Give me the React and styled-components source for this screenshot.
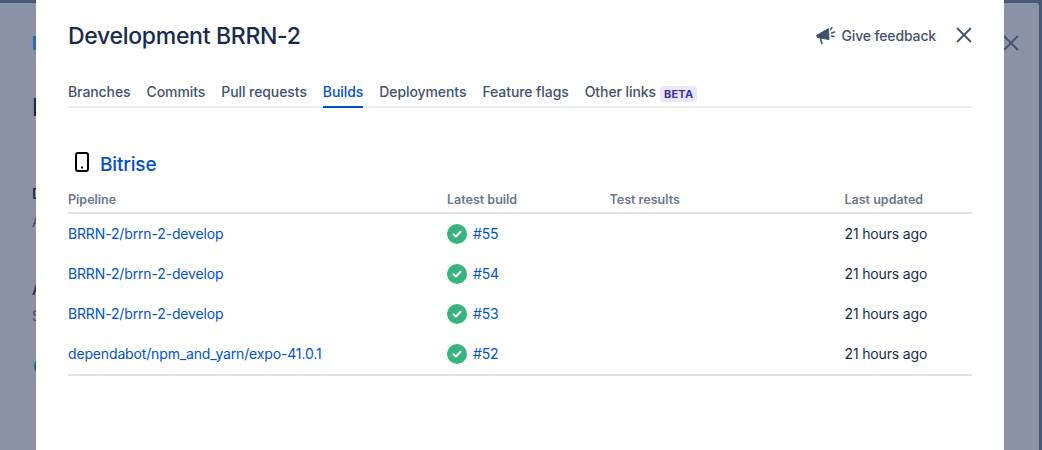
import React from "react";
import styled, { createGlobalStyle } from "styled-components";

const rows = [
  { pipeline: "BRRN-2/brrn-2-develop", build: "#55" },
  { pipeline: "BRRN-2/brrn-2-develop", build: "#54" },
  { pipeline: "BRRN-2/brrn-2-develop", build: "#53" },
  { pipeline: "dependabot/npm_and_yarn/expo-41.0.1", build: "#52" },
];

const tabs = ["Branches", "Commits", "Pull requests", "Builds", "Deployments", "Feature flags"];

const MegaphoneIcon = () => (
  <svg width="20" height="20" viewBox="0 0 20 20" fill="none">
    <path d="M0.5 10.5 L12.5 3.5 L13 14.5 L1.5 12.5 Z" fill="#42526e" stroke="#42526e" strokeLinejoin="round" />
    <path d="M4.5 14 L6 18.5" stroke="#42526e" strokeWidth="1.6" strokeLinecap="round" />
    <path d="M14.5 4.5 L16 2.5 M15.5 8 L18.5 7 M15.5 11 L18 11.5" stroke="#42526e" strokeWidth="1.4" strokeLinecap="round" />
  </svg>
);

const CloseIcon = ({ size = 16 }) => (
  <svg width={size} height={size} viewBox="0 0 16 16" fill="none">
    <path d="M1 1 L15 15 M15 1 L1 15" stroke="#42526e" strokeWidth="1.8" />
  </svg>
);

const PhoneIcon = () => (
  <PhoneSvg width="14" height="20" viewBox="0 0 14 20" fill="none">
    <rect x="1" y="1" width="12" height="18" rx="2" stroke="#000" strokeWidth="2" />
    <rect x="6" y="14.5" width="2" height="2" fill="#000" />
  </PhoneSvg>
);

const SuccessIcon = () => (
  <svg width="20" height="20" viewBox="0 0 20 20" fill="none">
    <circle cx="10" cy="10" r="10" fill="#36b37e" />
    <path d="M6.5 10.2 L9 12.5 L13.5 7.8" stroke="#fff" strokeWidth="2" strokeLinecap="round" strokeLinejoin="round" />
  </svg>
);

export default function App() {
  return (
    <>
      <GlobalStyle />
      <Page>
        <BackPanel>
          <BackTicket />
          <BackTitle>D</BackTitle>
          <BackStrong $gap={63}>D</BackStrong>
          <BackText $gap={8}>A</BackText>
          <BackStrong $gap={48}>A</BackStrong>
          <BackText $gap={6}>S</BackText>
          <BackAvatar />
          <BackClose>
            <CloseIcon />
          </BackClose>
        </BackPanel>
        <Modal>
          <ModalHeader>
            <Title>Development BRRN-2</Title>
            <HeaderActions>
              <Feedback>
                <MegaphoneIcon />
                Give feedback
              </Feedback>
              <CloseIcon />
            </HeaderActions>
          </ModalHeader>
          <TabBar>
            {tabs.map((tab) => (
              <Tab key={tab} $active={tab === "Builds"}>
                {tab}
              </Tab>
            ))}
            <Tab>
              Other links
              <Lozenge>BETA</Lozenge>
            </Tab>
          </TabBar>
          <Provider>
            <PhoneIcon />
            <ProviderName>Bitrise</ProviderName>
          </Provider>
          <HeadRow>
            <span>Pipeline</span>
            <span>Latest build</span>
            <span>Test results</span>
            <span>Last updated</span>
          </HeadRow>
          <Rows>
            {rows.map((row) => (
              <Row key={row.build}>
                <Link>{row.pipeline}</Link>
                <BuildCell>
                  <SuccessIcon />
                  <Link>{row.build}</Link>
                </BuildCell>
                <span />
                <CellText>21 hours ago</CellText>
              </Row>
            ))}
          </Rows>
        </Modal>
      </Page>
    </>
  );
}

const GlobalStyle = createGlobalStyle`
  html, body {
    margin: 0;
    padding: 0;
    overflow: hidden;
    background: #4a5875;
  }
  body {
    font-family: Inter, "Liberation Sans", sans-serif;
  }
`;

const Page = styled.div`
  position: relative;
  width: 1042px;
  height: 450px;
  overflow: hidden;
  background: #4a5875;
`;

const BackPanel = styled.div`
  position: relative;
  display: flex;
  flex-direction: column;
  align-items: flex-start;
  box-sizing: border-box;
  width: 1039px;
  height: 447px;
  margin-top: 3px;
  padding: 33px 0 0 32px;
  background: #8a93a6;
  border-top-right-radius: 3px;
  color: #1f3059;
`;

const BackTicket = styled.div`
  width: 6px;
  height: 14px;
  margin-left: 1px;
  background: #2d6fa3;
`;

const BackTitle = styled.div`
  margin-top: 45px;
  font-size: 24px;
  line-height: 26px;
  font-weight: 500;
  color: #14244d;
`;

const BackStrong = styled.div`
  margin-top: ${(p) => p.$gap}px;
  font-size: 14px;
  line-height: 20px;
  font-weight: 600;
`;

const BackText = styled.div`
  margin-top: ${(p) => p.$gap}px;
  font-size: 14px;
  line-height: 20px;
  color: #3d4c6b;
`;

const BackAvatar = styled.div`
  width: 20px;
  height: 20px;
  margin: 30px 0 0 2px;
  border-radius: 50%;
  background: #1f6b66;
`;

const BackClose = styled.div`
  position: absolute;
  top: 32px;
  left: 1003px;
  display: flex;
`;

const Modal = styled.div`
  position: absolute;
  top: 0;
  left: 36px;
  box-sizing: border-box;
  width: 968px;
  height: 450px;
  padding: 0 32px;
  background: #fff;
  color: #172b4d;
`;

const ModalHeader = styled.div`
  display: flex;
  align-items: center;
  justify-content: space-between;
  height: 71px;
`;

const Title = styled.h1`
  margin: 0;
  font-size: 23px;
  line-height: 28px;
  font-weight: 500;
  letter-spacing: -0.3px;
  color: #172b4d;
`;

const HeaderActions = styled.div`
  display: flex;
  align-items: center;
  gap: 20px;
  margin-top: -1px;
`;

const Feedback = styled.div`
  display: flex;
  align-items: center;
  gap: 6px;
  font-size: 14px;
  font-weight: 500;
  letter-spacing: -0.15px;
  color: #42526e;
`;

const TabBar = styled.div`
  display: flex;
  gap: 16px;
  height: 35px;
  border-bottom: 2px solid #ebecf0;
`;

const Tab = styled.div`
  display: flex;
  align-items: flex-start;
  gap: 4px;
  height: 37px;
  padding-top: 12px;
  box-sizing: border-box;
  font-size: 14px;
  line-height: 17px;
  font-weight: 500;
  letter-spacing: -0.08px;
  color: ${(p) => (p.$active ? "#0052cc" : "#42526e")};
  border-bottom: 2px solid ${(p) => (p.$active ? "#0052cc" : "transparent")};
`;

const Lozenge = styled.span`
  margin-top: 3px;
  padding: 0 4px;
  border-radius: 3px;
  background: #eae6ff;
  color: #403294;
  font-size: 11px;
  line-height: 16px;
  font-weight: 700;
  letter-spacing: 0.2px;
`;

const Provider = styled.div`
  display: flex;
  align-items: center;
  gap: 11px;
  margin-top: 44px;
  padding-left: 7px;
  height: 24px;
`;

const PhoneSvg = styled.svg`
  margin-bottom: 4px;
`;

const ProviderName = styled.span`
  margin-top: 1px;
  font-size: 19px;
  line-height: 24px;
  font-weight: 500;
  letter-spacing: -0.15px;
  color: #0052cc;
`;

const Grid = styled.div`
  display: grid;
  grid-template-columns: 379px 162.5px 235px 1fr;
  align-items: center;
`;

const HeadRow = styled(Grid)`
  margin-top: 12px;
  height: 22px;
  padding-bottom: 2px;
  border-bottom: 2px solid #dfe1e6;
  font-size: 12.5px;
  font-weight: 600;
  color: #6b778c;
`;

const Rows = styled.div`
  border-bottom: 2px solid #dfe1e6;
`;

const Row = styled(Grid)`
  height: 40px;
  font-size: 14px;
  letter-spacing: -0.15px;
  color: #172b4d;
`;

const CellText = styled.span`
  margin-top: -2px;
`;

const Link = styled(CellText)`
  color: #0052cc;
`;

const BuildCell = styled.div`
  display: flex;
  align-items: center;
  gap: 6px;
`;
